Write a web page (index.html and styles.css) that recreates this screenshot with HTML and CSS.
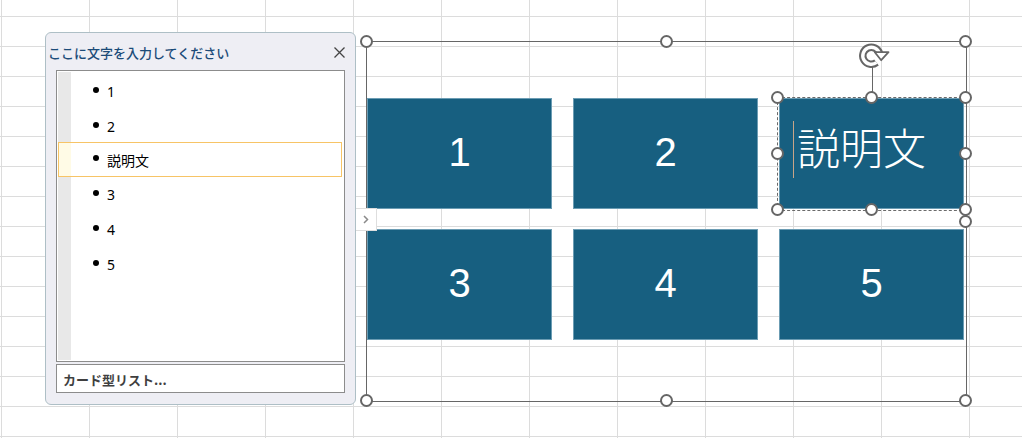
FILE: index.html
```html
<!DOCTYPE html>
<html lang="ja">
<head>
<meta charset="utf-8">
<title>SmartArt テキスト ウィンドウ</title>
<link rel="stylesheet" href="styles.css">
</head>
<body>
<div class="stage">
  <aside class="panel">
    <div class="panel-head">
      <span class="panel-title">ここに文字を入力してください</span>
      <span class="close">
        <svg width="11" height="11" viewBox="0 0 11 11"><path d="M0.5 0.5 L10.5 10.5 M10.5 0.5 L0.5 10.5" stroke="#444" stroke-width="1.3" fill="none"/></svg>
      </span>
    </div>
    <div class="list-box">
      <ul class="items">
        <li class="item"><span class="bullet"></span><span>1</span></li>
        <li class="item"><span class="bullet"></span><span>2</span></li>
        <li class="item selected"><span class="bullet"></span><span>説明文</span></li>
        <li class="item"><span class="bullet"></span><span>3</span></li>
        <li class="item"><span class="bullet"></span><span>4</span></li>
        <li class="item"><span class="bullet"></span><span>5</span></li>
      </ul>
    </div>
    <div class="footer-box">カード型リスト...</div>
  </aside>

  <div class="diagram">
    <div class="cards">
      <div class="card">1</div>
      <div class="card">2</div>
      <div class="card editing">
        <span class="caret"></span><span class="card-jp">説明文</span>
        <div class="sel-box">
          <span class="rot-line"></span>
          <svg class="rot-icon" width="34" height="28" viewBox="0 0 34 28">
            <path d="M20.4 10.2 A8.5 8.5 0 1 0 17.5 19.5" fill="none" stroke="#666" stroke-width="7.5"/>
            <path d="M20.4 10.2 A8.5 8.5 0 1 0 17.5 19.5" fill="none" stroke="#fff" stroke-width="3.4"/>
            <polygon points="15.8,9.2 29.5,9.2 22.2,17.2" fill="#fff" stroke="#666" stroke-width="1.8" stroke-linejoin="round"/>
          </svg>
          <span class="h sh-tl"></span><span class="h sh-tc"></span><span class="h sh-tr"></span>
          <span class="h sh-ml"></span><span class="h sh-mr"></span>
          <span class="h sh-bl"></span><span class="h sh-bc"></span><span class="h sh-br"></span>
        </div>
      </div>
      <div class="card">3</div>
      <div class="card">4</div>
      <div class="card">5</div>
    </div>
    <span class="h g-tl"></span><span class="h g-tc"></span><span class="h g-tr"></span>
    <span class="h g-ml"></span><span class="h g-mr"></span>
    <span class="h g-bl"></span><span class="h g-bc"></span><span class="h g-br"></span>
    <div class="tab">
      <svg width="6" height="9" viewBox="0 0 6 9"><path d="M1 1 L4.5 4.5 L1 8" fill="none" stroke="#8a8a8a" stroke-width="1.5"/></svg>
    </div>
  </div>
</div>
</body>
</html>
```

FILE: styles.css
```css
html, body {
  margin: 0;
  padding: 0;
}
body {
  width: 1022px;
  height: 438px;
  overflow: hidden;
  background-color: #fff;
  background-image:
    linear-gradient(to right, #dcdcdc 1px, transparent 1px),
    linear-gradient(to bottom, #dcdcdc 1px, transparent 1px);
  background-size: 88px 100%, 100% 30px;
  background-position: 1px 0, 0 16px;
  font-family: "Noto Sans", "Noto Sans CJK JP", sans-serif;
}
.stage {
  display: flex;
  align-items: flex-start;
  gap: 10px;
  padding: 32px 0 0 45px;
}

/* ---------- text pane ---------- */
.panel {
  box-sizing: border-box;
  width: 311px;
  height: 373px;
  border: 1px solid #aebfc6;
  border-radius: 6px;
  background: #eeeef4;
  padding: 0 10px 11px 10px;
  display: flex;
  flex-direction: column;
}
.panel-head {
  height: 37px;
  display: flex;
  align-items: center;
  justify-content: space-between;
  margin-left: -8px;
}
.panel-title {
  font-family: "Noto Sans CJK JP", sans-serif;
  font-size: 13px;
  font-weight: 500;
  color: #1b4b78;
  padding-top: 1px;
}
.close {
  display: flex;
  width: 11px;
  height: 11px;
  margin-top: 1px;
}
.list-box {
  box-sizing: border-box;
  height: 292px;
  border: 1px solid #8c8c8c;
  background: #fff;
  padding: 1px;
}
.items {
  list-style: none;
  margin: 0;
  padding: 2px 0 0 0;
  height: 100%;
  box-sizing: border-box;
  background: linear-gradient(to right, #e8e8e8 13px, #fff 13px);
}
.item {
  box-sizing: border-box;
  height: 35px;
  margin-right: 1px;
  border: 1px solid transparent;
  padding-left: 34px;
  display: flex;
  align-items: center;
  font-size: 14px;
  color: #000;
}
.item.selected {
  margin-top: -2px;
  border-color: #f7c466;
  background: linear-gradient(to right, #fffbe6 12px, #fff 12px);
}
.bullet {
  width: 6px;
  height: 6px;
  border-radius: 50%;
  background: #000;
  margin-right: 8px;
  margin-top: -3px;
  flex: none;
}
.footer-box {
  box-sizing: border-box;
  height: 29px;
  margin-top: 2px;
  border: 1px solid #8c8c8c;
  background: #fff;
  padding: 2px 0 0 6px;
  display: flex;
  align-items: center;
  font-family: "Noto Sans CJK JP", sans-serif;
  font-size: 13px;
  font-weight: 700;
  color: #3f3f3f;
}

/* ---------- diagram ---------- */
.diagram {
  position: relative;
  box-sizing: border-box;
  width: 601px;
  height: 361px;
  margin-top: 9px;
  border: 1px solid #666;
  padding-top: 56px;
}
.cards {
  display: grid;
  grid-template-columns: repeat(3, 185px);
  grid-auto-rows: 111px;
  column-gap: 21px;
  row-gap: 20px;
}
.card {
  position: relative;
  background: #175f80;
  box-shadow: inset 0 0 0 1px #6b9cb3;
  color: #fff;
  font-family: "Liberation Sans", Arial, sans-serif;
  font-size: 40px;
  display: flex;
  align-items: center;
  justify-content: center;
  padding-bottom: 3px;
  box-sizing: border-box;
}
.card.editing {
  justify-content: flex-start;
  padding: 0 0 8px 14px;
}
.caret {
  width: 1px;
  height: 57px;
  background: #c8a487;
  margin-right: 3px;
  flex: none;
}
.card-jp {
  font-family: "Noto Sans CJK JP", sans-serif;
  font-weight: 300;
  font-size: 43px;
  line-height: 43px;
  margin-bottom: 7px;
}
.sel-box {
  position: absolute;
  left: -2px;
  top: -1px;
  right: -3px;
  bottom: -2px;
  border: 1px dashed #6a6a6a;
}
.rot-line {
  position: absolute;
  left: 50%;
  top: -34px;
  width: 1px;
  height: 28px;
  background: #666;
}
.rot-icon {
  position: absolute;
  left: calc(50% - 13px);
  top: -55px;
}

/* handles */
.h {
  position: absolute;
  box-sizing: border-box;
  width: 13px;
  height: 13px;
  margin: -7px 0 0 -7px;
  border: 2px solid #666;
  border-radius: 50%;
  background: #fff;
  z-index: 2;
}
.g-tl { left: 0; top: 0; }
.g-tc { left: 50%; top: 0; }
.g-tr { left: 100%; top: 0; }
.g-ml { left: 0; top: 50%; }
.g-mr { left: 100%; top: 50%; }
.g-bl { left: 0; top: 100%; }
.g-bc { left: 50%; top: 100%; }
.g-br { left: 100%; top: 100%; }

.sh-tl { left: 0; top: 0; }
.sh-tc { left: 50%; top: 0; }
.sh-tr { left: 100%; top: 0; }
.sh-ml { left: 0; top: 50%; }
.sh-mr { left: 100%; top: 50%; }
.sh-bl { left: 0; top: 100%; }
.sh-bc { left: 50%; top: 100%; }
.sh-br { left: 100%; top: 100%; }

.tab {
  position: absolute;
  left: -11px;
  top: 166px;
  box-sizing: border-box;
  width: 21px;
  height: 23px;
  background: #fff;
  border: 1px solid #dedede;
  border-left: none;
  display: flex;
  align-items: center;
  justify-content: center;
  z-index: 3;
}
```
